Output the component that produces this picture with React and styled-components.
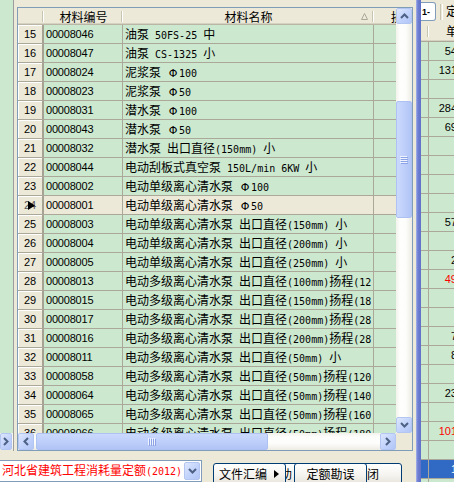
import React from 'react';
import styled, { createGlobalStyle } from 'styled-components';

const GREEN = '#cce8cf';
const BEIGE = '#ece9d8';
const GRID = '#aca899';
const CJK = '"Noto Sans CJK SC", sans-serif';
const SANS = '"Liberation Sans", "Noto Sans CJK SC", sans-serif';
const MONO = '"DejaVu Sans Mono", "Liberation Mono", monospace';

const Global = createGlobalStyle`
  html, body { margin: 0; padding: 0; background: ${BEIGE}; overflow: hidden; }
  body { font-family: ${CJK}; font-size: 12px; color: #000; }
`;

const Page = styled.div`
  display: flex;
  width: 454px;
  height: 482px;
  overflow: hidden;
  background: ${BEIGE};
`;

const Main = styled.div`
  display: flex;
  flex-direction: column;
  width: 416px;
  flex: none;
`;

const Upper = styled.div`
  display: flex;
  height: 451px;
  flex: none;
`;

const LeftStub = styled.div`
  width: 13px;
  flex: none;
  border-right: 1px solid #9d9d9d;
  display: flex;
  flex-direction: column;
`;

const StubGreen = styled.div`
  flex: 1;
  background: ${GREEN};
`;

const StubScroll = styled.div`
  height: 17px;
  flex: none;
  margin-bottom: 1px;
  display: flex;
  background: linear-gradient(#f3f1ec, #fdfdfa 40%, #eeede5);
`;

const Frame = styled.div`
  margin: 7px 0 0 3px;
  width: 396px;
  height: 444px;
  box-sizing: border-box;
  border: 1px solid #7f9db9;
  display: flex;
  flex-direction: column;
  flex: none;
`;

const FrameTop = styled.div`
  display: flex;
  height: 425px;
  flex: none;
`;

const FrameBottom = styled.div`
  display: flex;
  height: 17px;
  flex: none;
`;

const Table = styled.div`
  width: 378px;
  flex: none;
  display: flex;
  flex-direction: column;
  overflow: hidden;
  background: ${GREEN};
`;

const HeadRow = styled.div`
  display: flex;
  height: 17px;
  flex: none;
  background: ${BEIGE};
  box-shadow: inset 0 -1px #b9b6a6, inset 0 -2px #d6d2c2;
`;

const HeadCell = styled.div`
  flex: none;
  width: ${p => p.$w}px;
  height: 100%;
  display: flex;
  align-items: center;
  justify-content: center;
  font-family: ${CJK};
  font-size: 12px;
  line-height: 16px;
  white-space: nowrap;
  overflow: hidden;
  background:
    linear-gradient(#ffffff, #ffffff) no-repeat right 0 top 3px / 1px 11px,
    linear-gradient(#c7c5b2, #c7c5b2) no-repeat right 1px top 3px / 1px 11px;
`;

const HeadSplit = styled.div`
  flex: none;
  width: ${p => p.$w}px;
  height: 100%;
  display: grid;
  grid-template-columns: 1fr auto 1fr;
  align-items: center;
  font-family: ${CJK};
  font-size: 12px;
  line-height: 16px;
  background:
    linear-gradient(#ffffff, #ffffff) no-repeat right 0 top 3px / 1px 11px,
    linear-gradient(#c7c5b2, #c7c5b2) no-repeat right 1px top 3px / 1px 11px;
`;

const SortMark = styled.svg`
  justify-self: end;
  margin-right: 6px;
`;

const Row = styled.div`
  display: flex;
  height: 19px;
  flex: none;
  box-sizing: border-box;
  border-bottom: 1px solid ${GRID};
`;

const NumCell = styled.div`
  position: relative;
  flex: none;
  width: 26px;
  height: 100%;
  box-sizing: border-box;
  border-right: 2px solid #a5a293;
  background: ${BEIGE};
  box-shadow: inset 1px 1px #ffffff;
  text-align: center;
  font-family: ${SANS};
  font-size: 11px;
  line-height: 18px;
  color: ${p => (p.$cur ? '#555' : '#000')};
`;

const Pointer = styled.svg`
  position: absolute;
  left: 10px;
  top: 5px;
`;

const Cell = styled.div`
  flex: none;
  width: ${p => p.$w}px;
  height: 100%;
  box-sizing: border-box;
  border-right: 1px solid ${GRID};
  padding-left: 2px;
  overflow: hidden;
  white-space: pre;
  line-height: 18px;
  font-family: ${CJK};
  font-size: 12px;
  background: ${p => (p.$sel ? BEIGE : GREEN)};
`;

const CodeCell = styled(Cell)`
  font-family: ${SANS};
  font-size: 11px;
  letter-spacing: -0.2px;
`;

const Latin = styled.span`
  font-family: ${MONO};
  font-size: 10px;
`;

const Phi = styled.span`
  display: inline-block;
  width: 12px;
  text-align: center;
  font-family: "DejaVu Sans", sans-serif;
  font-size: 11px;
`;

function Mixed({ text }) {
  const parts = text.match(/[\x20-\x7e]+|Φ|[^\x20-\x7eΦ]+/g) || [];
  return parts.map((p, i) => {
    if (p === 'Φ') return <Phi key={i}>Φ</Phi>;
    if (/^[\x20-\x7e]+$/.test(p)) return <Latin key={i}>{p}</Latin>;
    return <span key={i}>{p}</span>;
  });
}

/* scrollbars */
const VScroll = styled.div`
  width: 16px;
  flex: none;
  display: flex;
  flex-direction: column;
  background: linear-gradient(to right, #f3f2ec, #fefefd 25%, #fdfdfb 60%, #edebe3);
`;

const SBtn = styled.div`
  width: ${p => p.$w || 16}px;
  height: ${p => p.$h || 16}px;
  flex: none;
  box-sizing: border-box;
  border: 1px solid #b3c6f2;
  border-radius: 2px;
  background: linear-gradient(135deg, #dde7fe, #c1d2fb 55%, #b2c6f6);
  display: flex;
  align-items: center;
  justify-content: center;
`;

const VThumb = styled.div`
  margin-top: ${p => p.$top}px;
  height: ${p => p.$h}px;
  flex: none;
  box-sizing: border-box;
  border: 1px solid #adc2f2;
  border-radius: 2px;
  background: linear-gradient(to right, #cbd9fd, #bccdf9 60%, #b1c4f5);
  display: flex;
  align-items: center;
  justify-content: center;
`;

const Down = styled(SBtn)`
  margin-top: auto;
`;

const HScroll = styled.div`
  width: 378px;
  flex: none;
  display: flex;
  background: linear-gradient(#f3f2ec, #fefefd 25%, #fdfdfb 60%, #edebe3);
`;

const HThumb = styled.div`
  margin-left: ${p => p.$left}px;
  width: ${p => p.$w}px;
  flex: none;
  box-sizing: border-box;
  border: 1px solid #adc2f2;
  border-radius: 2px;
  background: linear-gradient(#cbd9fd, #bccdf9 60%, #b1c4f5);
  display: flex;
  align-items: center;
  justify-content: center;
`;

const RightBtn = styled(SBtn)`
  margin-left: auto;
`;

const Corner = styled.div`
  width: 16px;
  flex: none;
  background: ${BEIGE};
`;

/* bottom bar */
const BottomBar = styled.div`
  display: flex;
  align-items: flex-start;
  height: 31px;
  flex: none;
`;

const Combo = styled.div`
  margin-top: 9px;
  width: 202px;
  height: 22px;
  flex: none;
  box-sizing: border-box;
  border: 1px solid #7f9db9;
  border-left: none;
  background: #ffffff;
  display: flex;
  align-items: center;
`;

const ComboText = styled.div`
  flex: 1;
  color: #ff0000;
  padding-left: 2px;
  line-height: 20px;
  white-space: pre;
  overflow: hidden;
  font-family: ${CJK};
  font-size: 12px;
`;

const ComboBtn = styled(SBtn)`
  margin-right: 1px;
`;

const Buttons = styled.div`
  display: flex;
  margin: 12px 0 0 11px;
`;

const XPButton = styled.div`
  width: ${p => p.$w}px;
  margin-left: ${p => p.$ml || 0}px;
  z-index: ${p => p.$z || 0};
  height: 22px;
  flex: none;
  box-sizing: border-box;
  border: 1px solid #003c74;
  border-radius: 3px;
  background: linear-gradient(#ffffff, #f5f4f0 55%, #e6e3da);
  display: flex;
  align-items: center;
  justify-content: ${p => (p.$left ? 'flex-start' : 'center')};
  padding-left: ${p => (p.$left ? 5 : 0)}px;
  gap: 7px;
  white-space: nowrap;
  overflow: hidden;
  font-family: ${CJK};
  font-size: 12px;
  line-height: 16px;
`;

/* splitter and right panel */
const Splitter = styled.div`
  width: 5px;
  flex: none;
  background: linear-gradient(to right, #a9b4ec, #7080d2 35%, #5f70c8);
`;

const RightPanel = styled.div`
  width: 33px;
  flex: none;
  display: flex;
  flex-direction: column;
  overflow: hidden;
  background: ${BEIGE};
`;

const RTop = styled.div`
  display: flex;
  align-items: flex-start;
  height: 22px;
  width: 60px;
  flex: none;
`;

const TabBox = styled.div`
  width: 15px;
  height: 19px;
  margin-top: 2px;
  flex: none;
  box-sizing: border-box;
  border: 1px solid #7f9db9;
  border-left: none;
  border-radius: 0 3px 3px 0;
  background: #ffffff;
  display: flex;
  align-items: center;
  font-family: ${SANS};
  font-weight: bold;
  font-size: 9px;
  line-height: 10px;
  padding-left: 1px;
  overflow: hidden;
`;

const TopSep = styled.div`
  width: 1px;
  height: 16px;
  margin: 4px 0 0 4px;
  flex: none;
  border-left: 1px solid #c7c5b2;
  border-right: 1px solid #ffffff;
`;

const TopLabel = styled.div`
  margin: 3px 0 0 3px;
  flex: none;
  font-family: ${CJK};
  font-size: 12px;
  line-height: 16px;
  white-space: nowrap;
`;

const RHead = styled.div`
  display: flex;
  height: 20px;
  width: 70px;
  flex: none;
  box-sizing: border-box;
  border-bottom: 1px solid ${GRID};
  box-shadow: inset 0 -1px #d6d2c2;
`;

const RHeadCell = styled.div`
  flex: none;
  width: ${p => p.$w}px;
  height: 100%;
  padding-left: ${p => p.$pl || 0}px;
  font-family: ${CJK};
  font-size: 12px;
  line-height: 18px;
  white-space: nowrap;
  background: ${p => (p.$div ? `linear-gradient(#ffffff, #ffffff) no-repeat right 0 top 4px / 1px 11px,
    linear-gradient(#c7c5b2, #c7c5b2) no-repeat right 1px top 4px / 1px 11px` : 'none')};
`;

const RRow = styled.div`
  display: flex;
  height: 19px;
  width: 70px;
  flex: none;
  box-sizing: border-box;
  border-bottom: 1px solid ${GRID};
  background: ${p => (p.$sel ? '#316ac5' : GREEN)};
`;

const RLead = styled.div`
  width: 8px;
  flex: none;
  box-sizing: border-box;
  border-right: 1px solid ${GRID};
`;

const RVal = styled.div`
  width: 28px;
  flex: none;
  text-align: right;
  font-family: ${SANS};
  font-size: 11px;
  line-height: 18px;
  color: ${p => (p.$sel ? '#ffffff' : p.$red ? '#ff0000' : '#000000')};
`;

/* icons */
const ChevUp = () => (
  <svg width="9" height="6" viewBox="0 0 9 6">
    <polyline points="1,5 4.5,1.5 8,5" fill="none" stroke="#4d6185" strokeWidth="2" />
  </svg>
);
const ChevDown = () => (
  <svg width="9" height="6" viewBox="0 0 9 6">
    <polyline points="1,1 4.5,4.5 8,1" fill="none" stroke="#4d6185" strokeWidth="2" />
  </svg>
);
const ChevLeft = () => (
  <svg width="6" height="9" viewBox="0 0 6 9">
    <polyline points="5,1 1.5,4.5 5,8" fill="none" stroke="#4d6185" strokeWidth="2" />
  </svg>
);
const ChevRight = () => (
  <svg width="6" height="9" viewBox="0 0 6 9">
    <polyline points="1,1 4.5,4.5 1,8" fill="none" stroke="#4d6185" strokeWidth="2" />
  </svg>
);
const GripH = () => (
  <svg width="8" height="8" viewBox="0 0 8 8">
    {[0, 2, 4, 6].map(y => (
      <g key={y}>
        <line x1="0" y1={y + 0.5} x2="7" y2={y + 0.5} stroke="#eef3ff" />
        <line x1="1" y1={y + 1.5} x2="8" y2={y + 1.5} stroke="#8ca4e6" />
      </g>
    ))}
  </svg>
);
const GripV = () => (
  <svg width="8" height="8" viewBox="0 0 8 8">
    {[0, 2, 4, 6].map(x => (
      <g key={x}>
        <line x1={x + 0.5} y1="0" x2={x + 0.5} y2="7" stroke="#eef3ff" />
        <line x1={x + 1.5} y1="1" x2={x + 1.5} y2="8" stroke="#8ca4e6" />
      </g>
    ))}
  </svg>
);

const rows = [
  [15, '00008046', '油泵 50FS-25 中'],
  [16, '00008047', '油泵 CS-1325 小'],
  [17, '00008024', '泥浆泵 Φ100'],
  [18, '00008023', '泥浆泵 Φ50'],
  [19, '00008031', '潜水泵 Φ100'],
  [20, '00008043', '潜水泵 Φ50'],
  [21, '00008032', '潜水泵 出口直径(150mm) 小'],
  [22, '00008044', '电动刮板式真空泵 150L/min 6KW 小'],
  [23, '00008002', '电动单级离心清水泵 Φ100'],
  [24, '00008001', '电动单级离心清水泵 Φ50'],
  [25, '00008003', '电动单级离心清水泵 出口直径(150mm) 小'],
  [26, '00008004', '电动单级离心清水泵 出口直径(200mm) 小'],
  [27, '00008005', '电动单级离心清水泵 出口直径(250mm) 小'],
  [28, '00008013', '电动多级离心清水泵 出口直径(100mm)扬程(12'],
  [29, '00008015', '电动多级离心清水泵 出口直径(150mm)扬程(18'],
  [30, '00008017', '电动多级离心清水泵 出口直径(200mm)扬程(28'],
  [31, '00008016', '电动多级离心清水泵 出口直径(200mm)扬程(28'],
  [32, '00008011', '电动多级离心清水泵 出口直径(50mm) 小'],
  [33, '00008058', '电动多级离心清水泵 出口直径(50mm)扬程(120'],
  [34, '00008064', '电动多级离心清水泵 出口直径(50mm)扬程(140'],
  [35, '00008065', '电动多级离心清水泵 出口直径(50mm)扬程(160'],
  [36, '00008066', '电动多级离心清水泵 出口直径(50mm)扬程(180'],
];

const rightVals = {
  0: ['54'], 1: ['131'], 3: ['284'], 4: ['69'], 9: ['57'], 11: ['2'],
  12: ['49', 'red'], 15: ['7'], 16: ['8'], 18: ['23'], 20: ['101', 'red'], 22: ['1', 'sel'],
};

export default function App() {
  return (
    <>
      <Global />
      <Page>
        <Main>
          <Upper>
            <LeftStub>
              <StubGreen />
              <StubScroll>
                <SBtn $w={12} $h={17}><ChevRight /></SBtn>
              </StubScroll>
            </LeftStub>
            <Frame>
              <FrameTop>
                <Table>
                  <HeadRow>
                    <HeadCell $w={26} />
                    <HeadCell $w={79}>材料编号</HeadCell>
                    <HeadSplit $w={251}>
                      <span />
                      <span>材料名称</span>
                      <SortMark width="7" height="7" viewBox="0 0 7 7">
                        <polygon points="3.5,0.5 6.5,6.5 0.5,6.5" fill="none" stroke="#aca899" />
                      </SortMark>
                    </HeadSplit>
                    <HeadCell $w={70}>损耗率</HeadCell>
                  </HeadRow>
                  {rows.map(([n, code, name]) => {
                    const cur = n === 24;
                    return (
                      <Row key={n}>
                        <NumCell $cur={cur}>
                          {n}
                          {cur && (
                            <Pointer width="7" height="9" viewBox="0 0 7 9">
                              <polygon points="0,0 7,4.5 0,9" fill="#000" />
                            </Pointer>
                          )}
                        </NumCell>
                        <CodeCell $w={79} $sel={cur}>{code}</CodeCell>
                        <Cell $w={251} $sel={cur}><Mixed text={name} /></Cell>
                        <Cell $w={70} $sel={cur} />
                      </Row>
                    );
                  })}
                </Table>
                <VScroll>
                  <SBtn><ChevUp /></SBtn>
                  <VThumb $top={77} $h={117}><GripH /></VThumb>
                  <Down><ChevDown /></Down>
                </VScroll>
              </FrameTop>
              <FrameBottom>
                <HScroll>
                  <SBtn $h={17}><ChevLeft /></SBtn>
                  <HThumb $left={2} $w={232}><GripV /></HThumb>
                  <RightBtn $h={17}><ChevRight /></RightBtn>
                </HScroll>
                <Corner />
              </FrameBottom>
            </Frame>
          </Upper>
          <BottomBar>
            <Combo>
              <ComboText><Mixed text="河北省建筑工程消耗量定额(2012)" /></ComboText>
              <ComboBtn $h={18}><ChevDown /></ComboBtn>
            </Combo>
            <Buttons>
              <XPButton $w={73} $z={2} $left>
                <span>文件汇编</span>
                <svg width="5" height="8" viewBox="0 0 5 8">
                  <polygon points="0,0 5,4 0,8" fill="#000" />
                </svg>
              </XPButton>
              <XPButton $w={70} $ml={-41} $z={1}>帮助</XPButton>
              <XPButton $w={73} $ml={-21} $z={2}>定额勘误</XPButton>
              <XPButton $w={70} $ml={-35} $z={1}>关闭</XPButton>
            </Buttons>
          </BottomBar>
        </Main>
        <Splitter />
        <RightPanel>
          <RTop>
            <TabBox>1-</TabBox>
            <TopSep />
            <TopLabel>定额</TopLabel>
          </RTop>
          <RHead>
            <RHeadCell $w={8} $div />
            <RHeadCell $w={60} $pl={17}>单价</RHeadCell>
          </RHead>
          {Array.from({ length: 24 }).map((_, i) => {
            const v = rightVals[i];
            const sel = v && v[1] === 'sel';
            const red = v && v[1] === 'red';
            return (
              <RRow key={i} $sel={sel}>
                <RLead />
                <RVal $sel={sel} $red={red}>{v ? v[0] : ''}</RVal>
              </RRow>
            );
          })}
        </RightPanel>
      </Page>
    </>
  );
}
